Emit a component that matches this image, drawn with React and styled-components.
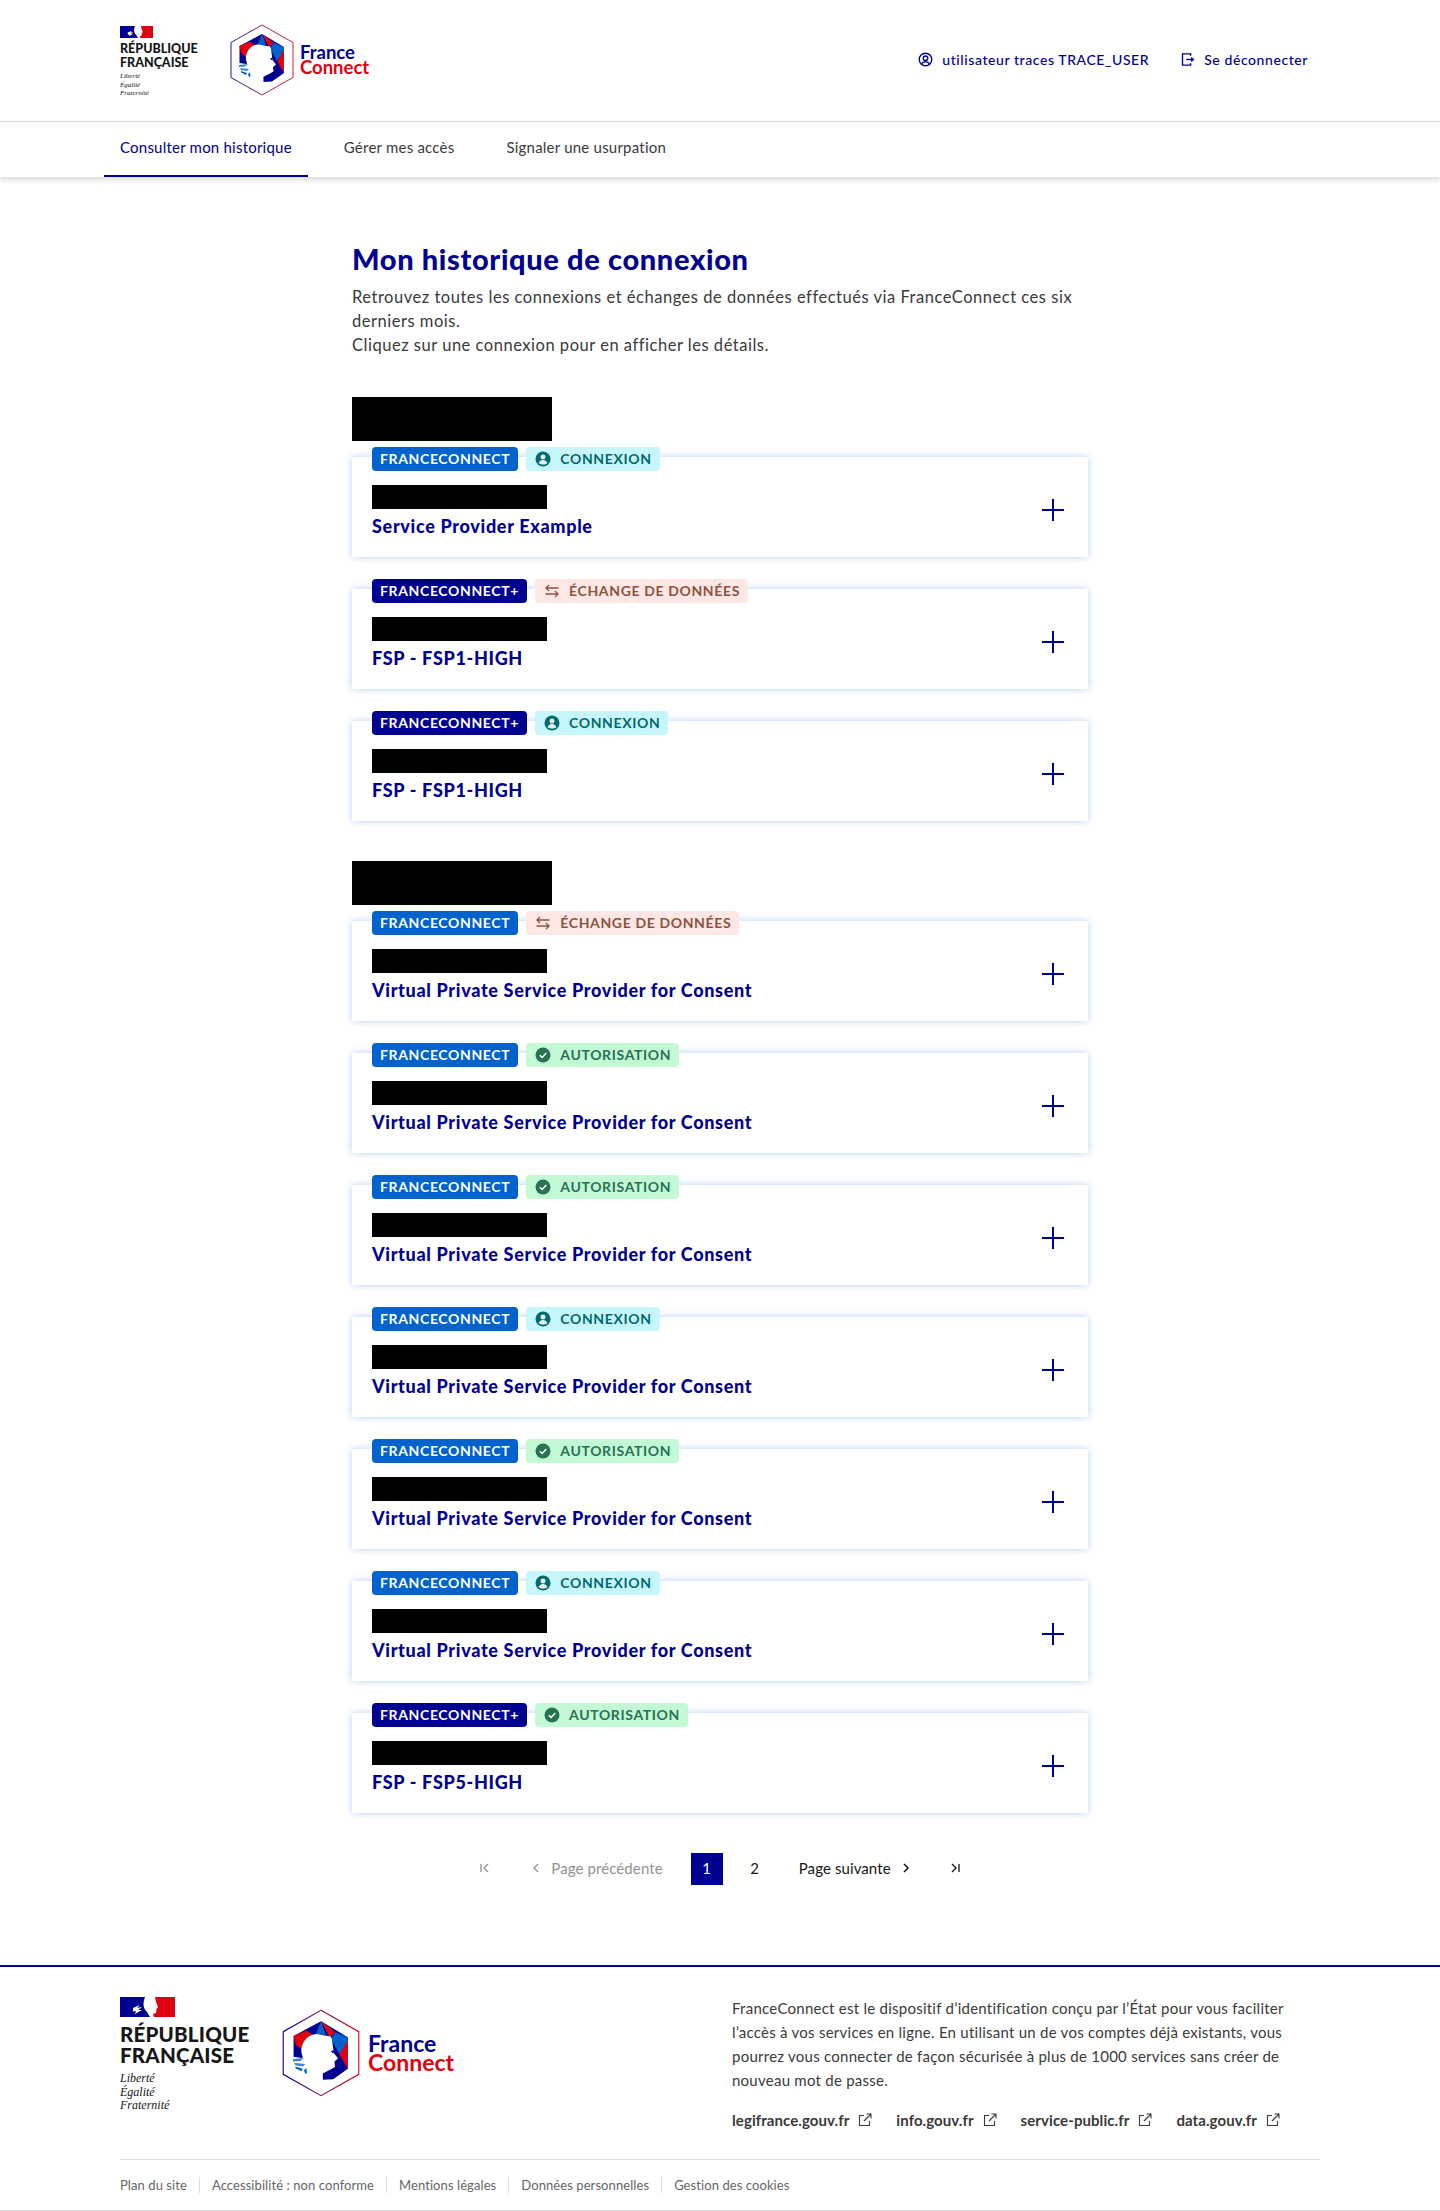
import React from "react";
import styled, { createGlobalStyle } from "styled-components";

const Global = createGlobalStyle`
  * { box-sizing: border-box; }
  html, body { margin: 0; padding: 0; background: #fff; }
  body { font-family: "Lato", "Noto Sans", sans-serif; color: #3a3a3a; }
`;

const Header = styled.header`
  height: 122px;
  border-bottom: 1px solid #dddddd;
  display: flex;
  justify-content: space-between;
  padding: 24px 132px 0 120px;
`;

const Brand = styled.div`
  display: flex;
  align-items: flex-start;
  gap: 32px;
`;

const Marianne = styled.div`
  display: flex;
  flex-direction: column;
  width: ${(p) => (p.$large ? 130 : 78)}px;
  color: #161616;
  padding-top: ${(p) => (p.$large ? 1 : 2)}px;
`;

const RF = styled.div`
  font-weight: 900;
  font-size: ${(p) => (p.$large ? 20.5 : 12.5)}px;
  line-height: ${(p) => (p.$large ? 20.5 : 13.5)}px;
  letter-spacing: ${(p) => (p.$large ? 0.2 : 0)}px;
  margin-top: ${(p) => (p.$large ? 7 : 4)}px;
  white-space: nowrap;
`;

const Motto = styled.div`
  font-family: "Liberation Serif", serif;
  font-style: italic;
  font-size: ${(p) => (p.$large ? 12 : 7)}px;
  line-height: ${(p) => (p.$large ? 13.5 : 8.5)}px;
  margin-top: ${(p) => (p.$large ? 7 : 3)}px;
`;

const LogoWrap = styled.div`
  display: flex;
  align-items: center;
  gap: ${(p) => (p.$large ? 8 : 6)}px;
  margin-top: ${(p) => (p.$large ? 12 : 0)}px;
`;

const Word = styled.div`
  font-weight: 700;
  font-size: ${(p) => (p.$large ? 23 : 18.5)}px;
  line-height: ${(p) => (p.$large ? 19 : 15)}px;
  color: ${(p) => (p.$red ? "#e1000f" : "#000091")};
`;

const Tools = styled.div`
  display: flex;
  align-items: center;
  height: 24px;
  margin-top: 23px;
  gap: 31px;
`;

const Tool = styled.a`
  display: flex;
  align-items: center;
  gap: 9px;
  color: #000091;
  font-size: 14px;
  font-weight: 500;
  letter-spacing: 0.58px;
`;

const Nav = styled.nav`
  height: 55px;
  display: flex;
  gap: 20px;
  padding-left: 104px;
  box-shadow: 0 3px 5px rgba(0, 0, 18, 0.14);
`;

const Tab = styled.a`
  display: flex;
  align-items: center;
  padding: 0 16px 3px;
  font-size: 15px;
  letter-spacing: 0.22px;
  color: ${(p) => (p.$active ? "#000091" : "#3a3a3a")};
  border-bottom: 2px solid ${(p) => (p.$active ? "#000091" : "transparent")};
`;

const Main = styled.main`
  width: 736px;
  margin: 0 auto;
  padding-top: 64px;
`;

const Title = styled.h1`
  margin: 0 0 8px;
  font-size: 29px;
  line-height: 36px;
  font-weight: 900;
  color: #000091;
  letter-spacing: 0.64px;
`;

const Intro = styled.p`
  margin: 0 0 40px;
  font-size: 16.5px;
  line-height: 24px;
  letter-spacing: 0.52px;
`;

const Group = styled.section`
  margin-bottom: 40px;
`;

const Masked = styled.div`
  background: #000;
  width: ${(p) => p.$w}px;
  height: ${(p) => p.$h}px;
`;

const CardList = styled.div`
  display: flex;
  flex-direction: column;
  gap: 32px;
  margin-top: 16px;
`;

const Card = styled.article`
  position: relative;
  height: 100px;
  padding: 0 20px;
  background: #fff;
  box-shadow: 0 0 7px rgba(0, 99, 203, 0.3);
`;

const Badges = styled.div`
  display: flex;
  gap: 8px;
  position: relative;
  top: -10px;
  margin-bottom: 4px;
`;

const Badge = styled.span`
  display: flex;
  align-items: center;
  gap: 9px;
  height: 24px;
  padding: 0 8px 2px ${(p) => (p.$kind ? 9 : 8)}px;
  border-radius: 4px;
  font-size: 14px;
  font-weight: 700;
  letter-spacing: 0.64px;
  text-transform: uppercase;
  color: ${(p) => p.$fg};
  background: ${(p) => p.$bg};
  svg {
    margin-top: 2px;
  }
`;

const CardBody = styled.div`
  display: flex;
  flex-direction: column;
  gap: 3px;
`;

const CardTitle = styled.div`
  color: #000091;
  font-size: 18px;
  line-height: 28px;
  font-weight: 900;
  letter-spacing: 0.67px;
`;

const Toggle = styled.button`
  position: absolute;
  right: 24px;
  top: 42px;
  width: 22px;
  height: 22px;
  padding: 0;
  border: 0;
  background: none;
  color: #000091;
  display: flex;
`;

const Pager = styled.div`
  display: flex;
  justify-content: center;
  align-items: center;
  gap: 16px;
  height: 32px;
  margin-bottom: 80px;
  font-size: 15px;
  letter-spacing: 0.1px;
`;

const PageLink = styled.a`
  display: flex;
  align-items: center;
  justify-content: center;
  gap: 10px;
  min-width: 32px;
  height: 32px;
  padding: 0 ${(p) => (p.$wide ? 12 : 0)}px 2px;
  margin-left: ${(p) => p.$ml || 0}px;
  color: ${(p) => (p.$off ? "#929292" : p.$current ? "#fff" : "#161616")};
  background: ${(p) => (p.$current ? "#000091" : "transparent")};
`;

const Footer = styled.footer`
  border-top: 2px solid #000091;
  padding: 0 120px;
  border-bottom: 1px solid #dddddd;
`;

const FooterTop = styled.div`
  height: 193px;
  display: flex;
  justify-content: space-between;
  padding-top: 29px;
  border-bottom: 1px solid #dddddd;
`;

const About = styled.div`
  width: 588px;
  padding-right: 20px;
`;

const AboutText = styled.p`
  margin: 0 0 16px;
  font-size: 15px;
  line-height: 24px;
  letter-spacing: 0.25px;
`;

const ExtLinks = styled.div`
  display: flex;
  gap: 24px;
`;

const ExtLink = styled.a`
  display: flex;
  align-items: center;
  gap: 9px;
  height: 24px;
  color: #3a3a3a;
  font-size: 15px;
  font-weight: 700;
  letter-spacing: 0.08px;
`;

const FooterBottom = styled.div`
  height: 50px;
  display: flex;
  align-items: center;
`;

const BottomLink = styled.a`
  font-size: 13px;
  color: #666666;
  letter-spacing: 0.08px;
  padding-right: 12px;
  margin-right: 12px;
  line-height: 16px;
  border-right: ${(p) => (p.$last ? "0" : "1px solid #dddddd")};
`;

function Flag({ w, h }) {
  return (
    <svg width={w} height={h} viewBox="0 0 55 20">
      <rect width="32" height="20" fill="#000091" />
      <rect x="32" width="23" height="20" fill="#e1000f" />
      <path d="M25 0h10l1 5 2 5-1.500 2-.5 4-3 1 1 3h-4l-3-5c-3-3-5-7-2-15z" fill="#fff" />
      <path d="M13 11l7-3-3 3 5-1-4 3 4 0-7 4 1-3-3 .5z" fill="#fff" />
    </svg>
  );
}

function Hexagon({ w, h, id }) {
  return (
    <svg width={w} height={h} viewBox="0 0 64 72">
      <defs>
        <linearGradient id={id} x1="0" y1="0" x2="1" y2="0">
          <stop offset="0" stopColor="#000091" />
          <stop offset="0.5" stopColor="#7a1060" />
          <stop offset="1" stopColor="#e1000f" />
        </linearGradient>
      </defs>
      <polygon points="32,1 63,18.500 63,53.500 32,71 1,53.500 1,18.500" fill="#fff" stroke={`url(#${id})`} strokeWidth="0.9" />
      <polygon points="9.500,22 32,10 54,23 54,49 42,57.500 33.500,58 33,30 16,40 9.500,39" fill="#000091" />
      <polygon points="9.500,22 20,17.500 25,21 16,33 11,29" fill="#e1000f" />
      <polygon points="32,10 27.500,21 36,21" fill="#0063cb" />
      <polygon points="32,10 44,19 39,23" fill="#e1000f" />
      <polygon points="44,19 54,23 54,27 47,37 40,24" fill="#0063cb" />
      <polygon points="54,26 54,49 47,37" fill="#e1000f" />
      <path d="M16 36C15 29 20 21 28 20.500L40 22.500 41 25 42.500 36 46 40.500 43 43 43.500 47.500 39 50 33 53 33 58 20 48z" fill="#fff" />
      <path d="M40 34.500l3-1-1 3z" fill="#000091" />
      <path d="M9 41l9-1-3 2.500-6 .5zM10 44l9 1-2 2-6-1z" fill="#3a85d8" />
      <path d="M11 47l6 2-1 2-5-2.500zM18 50l2-1.500 .5 4-1.500 .5z" fill="#0063cb" />
    </svg>
  );
}

function Logo({ large }) {
  return (
    <LogoWrap $large={large}>
      <Hexagon w={large ? 78 : 64} h={large ? 90 : 72} id={large ? "hexFooter" : "hexHeader"} />
      <div>
        <Word $large={large}>France</Word>
        <Word $large={large} $red>
          Connect
        </Word>
      </div>
    </LogoWrap>
  );
}

function Republic({ large }) {
  return (
    <Marianne $large={large}>
      <Flag w={large ? 55 : 33} h={large ? 20 : 12} />
      <RF $large={large}>
        RÉPUBLIQUE
        <br />
        FRANÇAISE
      </RF>
      <Motto $large={large}>
        Liberté
        <br />
        Égalité
        <br />
        Fraternité
      </Motto>
    </Marianne>
  );
}

const UserIcon = () => (
  <svg width="15" height="15" viewBox="0 0 24 24" fill="none" stroke="currentColor" strokeWidth="2.2">
    <circle cx="12" cy="12" r="10" />
    <circle cx="12" cy="10" r="3.600" />
    <path d="M5.500 19c1.500-2.500 3.800-3.500 6.500-3.500s5 1 6.500 3.500" />
  </svg>
);

const LogoutIcon = () => (
  <svg width="15" height="15" viewBox="0 0 24 24" fill="none" stroke="currentColor" strokeWidth="2.2">
    <path d="M17 6V3H4v18h13v-3" />
    <path d="M10 12h11" />
    <path d="M18 9l3.500 3-3.500 3" fill="currentColor" />
  </svg>
);

const ConnexionIcon = () => (
  <svg width="16" height="16" viewBox="0 0 16 16">
    <circle cx="8" cy="8" r="7.500" fill="currentColor" />
    <circle cx="8" cy="6" r="2.500" fill="#fff" opacity=".9" />
    <path d="M3.500 12c1-2 2.600-3 4.500-3s3.500 1 4.500 3c-2.400 2-6.600 2-9 0z" fill="#fff" opacity=".9" />
  </svg>
);

const SwapIcon = () => (
  <svg width="16" height="16" viewBox="0 0 16 16" fill="none" stroke="currentColor" strokeWidth="1.300">
    <path d="M2 5h12.500M5 2L2 5l3 3" />
    <path d="M14 11H1.500M11 8l3 3-3 3" />
  </svg>
);

const CheckIcon = () => (
  <svg width="16" height="16" viewBox="0 0 16 16">
    <circle cx="8" cy="8" r="7.500" fill="currentColor" />
    <path d="M4.800 8.200l2.300 2.200 4.200-4.400" fill="none" stroke="#fff" strokeWidth="1.500" />
  </svg>
);

const PlusIcon = () => (
  <svg width="22" height="22" viewBox="0 0 22 22" stroke="currentColor" strokeWidth="2">
    <path d="M11 0v22M0 11h22" />
  </svg>
);

const ExternalIcon = () => (
  <svg width="14" height="14" viewBox="0 0 14 14" fill="none" stroke="#3a3a3a" strokeWidth="1.100">
    <path d="M6 2.500H1.500v10h10V8" />
    <path d="M6 8l6.500-6.500M8.500 1h4.500v4.500" />
  </svg>
);

const kinds = {
  connexion: { label: "Connexion", fg: "#006a6f", bg: "#c7f6fc", Icon: ConnexionIcon },
  echange: { label: "Échange de données", fg: "#8d533e", bg: "#fee7e4", Icon: SwapIcon },
  autorisation: { label: "Autorisation", fg: "#297254", bg: "#c3fad5", Icon: CheckIcon },
};

const FIRST_DAY = [
  { plus: false, kind: "connexion", title: "Service Provider Example" },
  { plus: true, kind: "echange", title: "FSP - FSP1-HIGH" },
  { plus: true, kind: "connexion", title: "FSP - FSP1-HIGH" },
];

const VPSP = "Virtual Private Service Provider for Consent";
const SECOND_DAY = [
  { plus: false, kind: "echange", title: VPSP },
  { plus: false, kind: "autorisation", title: VPSP },
  { plus: false, kind: "autorisation", title: VPSP },
  { plus: false, kind: "connexion", title: VPSP },
  { plus: false, kind: "autorisation", title: VPSP },
  { plus: false, kind: "connexion", title: VPSP },
  { plus: true, kind: "autorisation", title: "FSP - FSP5-HIGH" },
];

function TraceCard({ plus, kind, title }) {
  const { label, fg, bg, Icon } = kinds[kind];
  return (
    <Card>
      <Badges>
        <Badge $fg="#fff" $bg={plus ? "#000091" : "#0063cb"}>
          {plus ? "FranceConnect+" : "FranceConnect"}
        </Badge>
        <Badge $kind $fg={fg} $bg={bg}>
          <Icon />
          {label}
        </Badge>
      </Badges>
      <CardBody>
        <Masked $w={175} $h={24} />
        <CardTitle>{title}</CardTitle>
      </CardBody>
      <Toggle aria-label="Afficher les détails">
        <PlusIcon />
      </Toggle>
    </Card>
  );
}

function Day({ traces }) {
  return (
    <Group>
      <Masked $w={200} $h={44} />
      <CardList>
        {traces.map((t, i) => (
          <TraceCard key={i} {...t} />
        ))}
      </CardList>
    </Group>
  );
}

export default function App() {
  return (
    <>
      <Global />
      <Header>
        <Brand>
          <Republic />
          <Logo />
        </Brand>
        <Tools>
          <Tool>
            <UserIcon />
            utilisateur traces TRACE_USER
          </Tool>
          <Tool>
            <LogoutIcon />
            Se déconnecter
          </Tool>
        </Tools>
      </Header>
      <Nav>
        <Tab $active>Consulter mon historique</Tab>
        <Tab>Gérer mes accès</Tab>
        <Tab>Signaler une usurpation</Tab>
      </Nav>
      <Main>
        <Title>Mon historique de connexion</Title>
        <Intro>
          Retrouvez toutes les connexions et échanges de données effectués via FranceConnect ces six
          derniers mois.
          <br />
          Cliquez sur une connexion pour en afficher les détails.
        </Intro>
        <Day traces={FIRST_DAY} />
        <Day traces={SECOND_DAY} />
        <Pager>
          <PageLink $off>
            <svg width="12" height="12" viewBox="0 0 12 12" fill="none" stroke="currentColor" strokeWidth="1.300">
              <path d="M2 2v8M9 2L5 6l4 4" />
            </svg>
          </PageLink>
          <PageLink $off $wide $ml={2}>
            <svg width="10" height="10" viewBox="0 0 10 10" fill="none" stroke="currentColor" strokeWidth="1.300">
              <path d="M7 1L3 5l4 4" />
            </svg>
            Page précédente
          </PageLink>
          <PageLink $current>1</PageLink>
          <PageLink>2</PageLink>
          <PageLink $wide>
            Page suivante
            <svg width="10" height="10" viewBox="0 0 10 10" fill="none" stroke="currentColor" strokeWidth="1.500">
              <path d="M3 1l4 4-4 4" />
            </svg>
          </PageLink>
          <PageLink>
            <svg width="12" height="12" viewBox="0 0 12 12" fill="none" stroke="currentColor" strokeWidth="1.300">
              <path d="M10 2v8M3 2l4 4-4 4" />
            </svg>
          </PageLink>
        </Pager>
      </Main>
      <Footer>
        <FooterTop>
          <Brand>
            <Republic large />
            <Logo large />
          </Brand>
          <About>
            <AboutText>
              FranceConnect est le dispositif d’identification conçu par l’État pour vous faciliter
              l’accès à vos services en ligne. En utilisant un de vos comptes déjà existants, vous
              pourrez vous connecter de façon sécurisée à plus de 1000 services sans créer de
              nouveau mot de passe.
            </AboutText>
            <ExtLinks>
              {["legifrance.gouv.fr", "info.gouv.fr", "service-public.fr", "data.gouv.fr"].map((l) => (
                <ExtLink key={l}>
                  {l}
                  <ExternalIcon />
                </ExtLink>
              ))}
            </ExtLinks>
          </About>
        </FooterTop>
        <FooterBottom>
          <BottomLink>Plan du site</BottomLink>
          <BottomLink>Accessibilité : non conforme</BottomLink>
          <BottomLink>Mentions légales</BottomLink>
          <BottomLink>Données personnelles</BottomLink>
          <BottomLink $last>Gestion des cookies</BottomLink>
        </FooterBottom>
      </Footer>
    </>
  );
}
